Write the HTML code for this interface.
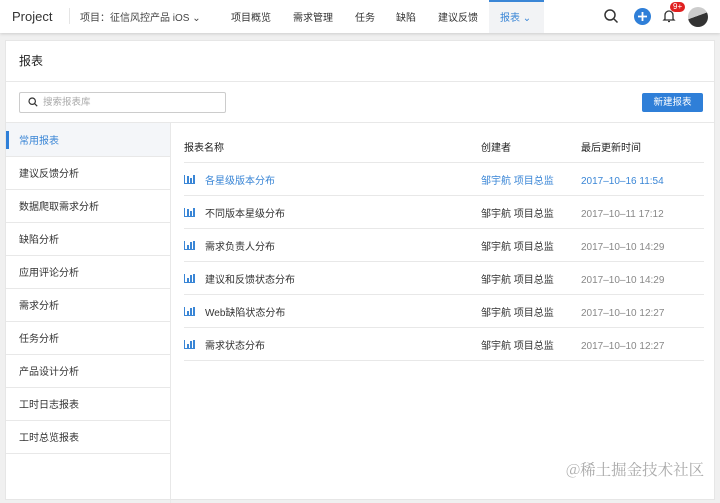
<!DOCTYPE html>
<html><head><meta charset="utf-8"><style>
*{margin:0;padding:0;box-sizing:border-box}
body{width:720px;height:486px;overflow:hidden;background:#f0f0f0;font-family:"Liberation Sans","Noto Sans CJK SC",sans-serif;font-size:10px;color:#333;position:relative}
.a{position:absolute;white-space:nowrap;line-height:18px}
.hdr{position:absolute;left:0;top:0;width:720px;height:33px;background:#fff;box-shadow:0 1px 3px rgba(0,0,0,.15)}
.card{position:absolute;left:5px;top:40px;width:710px;height:460px;background:#fff;border:1px solid #e6e6e6}
.hl{position:absolute;height:1px;background:#e8e8e8}
.blue{color:#3a86d6}
.ico{position:absolute;width:11px;height:9px;border-left:1.5px solid #3a86d6;border-bottom:1.5px solid #3a86d6}
.ico i{position:absolute;bottom:0;width:1.5px;background:#3a86d6}
</style></head><body>
<div class="hdr">
<div class="a" style="left:12px;top:9px;font-size:13px;line-height:15px;color:#333">Project</div>
<div class="a" style="left:69px;top:8px;width:1px;height:16px;background:#e5e5e5"></div>
<div class="a" style="left:80px;top:10px;color:#444">项目：征信风控产品 iOS ⌄</div>
<div class="a" style="left:231px;top:10px">项目概览</div>
<div class="a" style="left:293px;top:10px">需求管理</div>
<div class="a" style="left:355px;top:10px">任务</div>
<div class="a" style="left:396px;top:10px">缺陷</div>
<div class="a" style="left:438px;top:10px">建议反馈</div>
<div class="a" style="left:489px;top:0;width:55px;height:33px;background:#f2f3f5;border-top:2px solid #3a86d6"></div>
<div class="a blue" style="left:500px;top:10px">报表 ⌄</div>
<svg class="a" style="left:603px;top:8px" width="16" height="16" viewBox="0 0 16 16"><circle cx="7" cy="7" r="5" fill="none" stroke="#333" stroke-width="1.5"/><path d="M11 11l3.5 3.5" stroke="#333" stroke-width="1.5"/></svg>
<svg class="a" style="left:634px;top:8px" width="17" height="17" viewBox="0 0 17 17"><circle cx="8.5" cy="8.5" r="8.5" fill="#2f7fd8"/><path d="M8.5 4v9M4 8.5h9" stroke="#fff" stroke-width="1.8"/></svg>
<svg class="a" style="left:662px;top:8px" width="14" height="16" viewBox="0 0 14 16"><path d="M3 11V7a4 4 0 018 0v4l1 1H2z M6 13.5h2" fill="none" stroke="#333" stroke-width="1.3"/></svg>
<div class="a" style="left:670px;top:2px;background:#e02020;color:#fff;font-size:8px;border-radius:6px;padding:0 3px;line-height:10px">9+</div>
<div class="a" style="left:688px;top:7px;width:20px;height:20px;border-radius:50%;background:linear-gradient(160deg,#ccc 45%,#333 46%)"></div>
</div>
<div class="card">
<div class="a" style="left:13px;top:13px;font-size:12px;line-height:14px;color:#222">报表</div>
<div class="hl" style="left:0;top:40px;width:708px"></div>
<div class="a" style="left:13px;top:51px;width:207px;height:21px;border:1px solid #ccc;border-radius:2px"></div>
<svg class="a" style="left:22px;top:56px" width="10" height="10" viewBox="0 0 10 10"><circle cx="4.2" cy="4.2" r="3.2" fill="none" stroke="#333" stroke-width="1.2"/><path d="M6.6 6.6l2.6 2.6" stroke="#333" stroke-width="1.2"/></svg>
<div class="a" style="left:37px;top:53px;color:#aaa;font-size:9.5px">搜索报表库</div>
<div class="a" style="left:636px;top:52px;width:61px;height:19px;background:#2f7fd8;border-radius:2px;color:#fff;text-align:center;line-height:19px;font-size:9.5px">新建报表</div>
<div class="hl" style="left:0;top:81px;width:708px"></div>
<div class="a" style="left:164px;top:82px;width:1px;height:380px;background:#e8e8e8"></div>
<div class="a" style="left:0;top:82px;width:164px;height:33px;background:#f4f6f9"></div>
<div class="a" style="left:0;top:90px;width:3px;height:18px;background:#2f7fd8"></div>
<div class="a blue" style="left:13px;top:92px">常用报表</div>
<div class="hl" style="left:0;top:115px;width:164px"></div>
<div class="a" style="left:13px;top:125px">建议反馈分析</div><div class="hl" style="left:0;top:148px;width:164px"></div>
<div class="a" style="left:13px;top:158px">数据爬取需求分析</div><div class="hl" style="left:0;top:181px;width:164px"></div>
<div class="a" style="left:13px;top:191px">缺陷分析</div><div class="hl" style="left:0;top:214px;width:164px"></div>
<div class="a" style="left:13px;top:224px">应用评论分析</div><div class="hl" style="left:0;top:247px;width:164px"></div>
<div class="a" style="left:13px;top:257px">需求分析</div><div class="hl" style="left:0;top:280px;width:164px"></div>
<div class="a" style="left:13px;top:290px">任务分析</div><div class="hl" style="left:0;top:313px;width:164px"></div>
<div class="a" style="left:13px;top:323px">产品设计分析</div><div class="hl" style="left:0;top:346px;width:164px"></div>
<div class="a" style="left:13px;top:356px">工时日志报表</div><div class="hl" style="left:0;top:379px;width:164px"></div>
<div class="a" style="left:13px;top:389px">工时总览报表</div><div class="hl" style="left:0;top:412px;width:164px"></div>

<div class="a" style="left:178px;top:99px;color:#222">报表名称</div>
<div class="a" style="left:475px;top:99px;color:#222">创建者</div>
<div class="a" style="left:575px;top:99px;color:#222">最后更新时间</div>
<div class="hl" style="left:178px;top:121px;width:520px"></div>

<div class="ico" style="left:178px;top:134px"><i style="left:2px;height:7px"></i><i style="left:5px;height:5px"></i><i style="left:8px;height:8px"></i></div>
<div class="a blue" style="left:199px;top:132px">各星级版本分布</div><div class="a blue" style="left:475px;top:132px">邹宇航 项目总监</div><div class="a blue" style="left:575px;top:132px">2017–10–16 11:54</div>
<div class="hl" style="left:178px;top:154px;width:520px"></div>
<div class="ico" style="left:178px;top:167px"><i style="left:2px;height:7px"></i><i style="left:5px;height:5px"></i><i style="left:8px;height:8px"></i></div>
<div class="a" style="left:199px;top:165px">不同版本星级分布</div><div class="a" style="left:475px;top:165px">邹宇航 项目总监</div><div class="a" style="left:575px;top:165px;color:#888">2017–10–11 17:12</div>
<div class="hl" style="left:178px;top:187px;width:520px"></div>
<div class="ico" style="left:178px;top:200px"><i style="left:2px;height:4px"></i><i style="left:5px;height:7px"></i><i style="left:8px;height:8px"></i></div>
<div class="a" style="left:199px;top:198px">需求负责人分布</div><div class="a" style="left:475px;top:198px">邹宇航 项目总监</div><div class="a" style="left:575px;top:198px;color:#888">2017–10–10 14:29</div>
<div class="hl" style="left:178px;top:220px;width:520px"></div>
<div class="ico" style="left:178px;top:233px"><i style="left:2px;height:4px"></i><i style="left:5px;height:7px"></i><i style="left:8px;height:8px"></i></div>
<div class="a" style="left:199px;top:231px">建议和反馈状态分布</div><div class="a" style="left:475px;top:231px">邹宇航 项目总监</div><div class="a" style="left:575px;top:231px;color:#888">2017–10–10 14:29</div>
<div class="hl" style="left:178px;top:253px;width:520px"></div>
<div class="ico" style="left:178px;top:266px"><i style="left:2px;height:4px"></i><i style="left:5px;height:7px"></i><i style="left:8px;height:8px"></i></div>
<div class="a" style="left:199px;top:264px">Web缺陷状态分布</div><div class="a" style="left:475px;top:264px">邹宇航 项目总监</div><div class="a" style="left:575px;top:264px;color:#888">2017–10–10 12:27</div>
<div class="hl" style="left:178px;top:286px;width:520px"></div>
<div class="ico" style="left:178px;top:299px"><i style="left:2px;height:4px"></i><i style="left:5px;height:7px"></i><i style="left:8px;height:8px"></i></div>
<div class="a" style="left:199px;top:297px">需求状态分布</div><div class="a" style="left:475px;top:297px">邹宇航 项目总监</div><div class="a" style="left:575px;top:297px;color:#888">2017–10–10 12:27</div>
<div class="hl" style="left:178px;top:319px;width:520px"></div>
</div>
<div class="a" style="left:566px;top:460px;font-size:15.5px;line-height:18px;color:#aaa;font-family:'Noto Serif CJK SC',serif">@稀土掘金技术社区</div>
</body></html>
